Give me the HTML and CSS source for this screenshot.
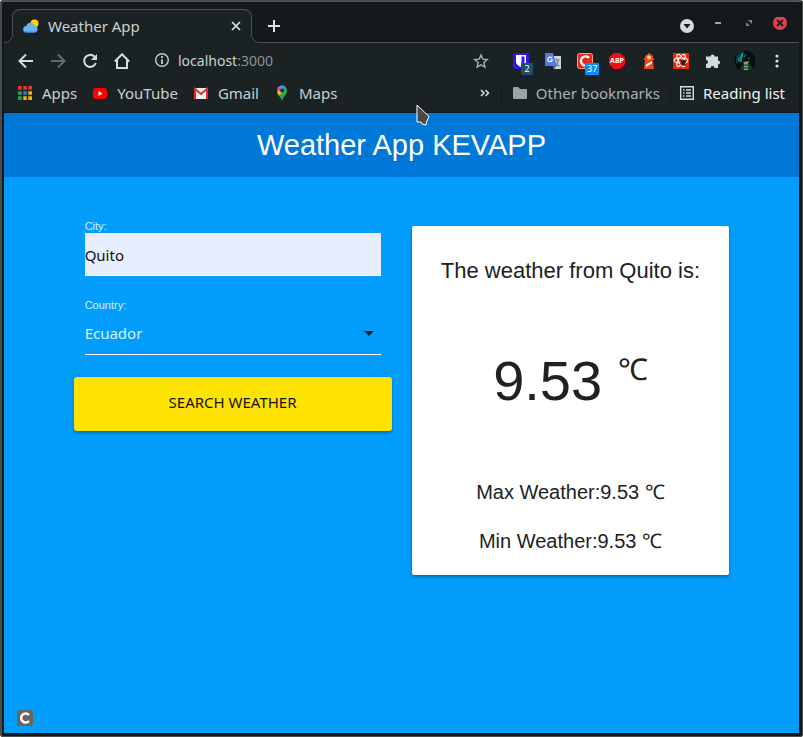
FILE: index.html
```html
<!DOCTYPE html>
<html lang="en">
<head>
<meta charset="utf-8">
<title>Weather App</title>
<link rel="stylesheet" href="styles.css">
</head>
<body>
<div class="window">
  <div class="tabstrip">
    <div class="tab">
      <svg class="foot foot-left" viewBox="0 0 9 9"><path class="foot-fill" d="M8.500 0H9V9H0V8.500A8.500 8.500 0 0 0 8.500 0z"/><path class="foot-line" d="M0 8.500A8 8 0 0 0 8.500 0"/></svg>
      <svg class="icon16" viewBox="0 0 16 16"><circle cx="11.500" cy="5.500" r="4" fill="#ffd400"/><path d="M3.500 14.500a3.200 3.200 0 0 1-.2-6.400A4.300 4.300 0 0 1 11.500 7.500a3.600 3.600 0 0 1 .5 7z" fill="#6bb3f8"/><path d="M1 13q2 2 11 1.300 2-.3 2.500-1.300-3 1-13.500 0z" fill="#4389df"/></svg>
      <span class="tab-title">Weather App</span>
      <button class="plain tab-close" aria-label="Close tab"><svg width="10" height="10" viewBox="0 0 10 10"><path d="M1 1l8 8M9 1L1 9" stroke="#dce5e5" stroke-width="1.700"/></svg></button>
      <svg class="foot foot-right" viewBox="0 0 9 9"><path class="foot-fill" d="M.5 0H0V9H9V8.500A8.500 8.500 0 0 1 .5 0z"/><path class="foot-line" d="M9 8.500A8 8 0 0 1 .5 0"/></svg>
    </div>
    <button class="plain new-tab" aria-label="New tab"><svg width="12" height="12" viewBox="0 0 12 12"><path d="M6 0v12M0 6h12" stroke="#dce5e5" stroke-width="2"/></svg></button>
    <div class="window-buttons">
      <button class="plain" aria-label="Search tabs"><svg class="icon16" viewBox="0 0 16 16"><circle cx="8" cy="9" r="7" fill="#d3dcdb"/><path d="M4.500 7h7L8 11.500z" fill="#141a1b"/></svg></button>
      <button class="plain" aria-label="Minimize"><svg class="icon16" viewBox="0 0 16 16"><path d="M5 6h6" stroke="#9ca3a5" stroke-width="2"/></svg></button>
      <button class="plain" aria-label="Restore"><svg class="icon16" viewBox="0 0 16 16" fill="#7e8688"><path d="M7 3h4v4zM5 5v4h4z"/></svg></button>
      <button class="plain" aria-label="Close"><svg class="icon16" viewBox="0 0 16 16"><circle cx="8" cy="6" r="7" fill="#e0434f"/><path d="M5 3l6 6M11 3L5 9" stroke="#22191b" stroke-width="2"/></svg></button>
    </div>
  </div>

  <div class="toolbar">
    <button class="plain tool" aria-label="Back"><svg class="icon16" viewBox="0 0 16 16"><path d="M15 8H2M8 1.500L1.500 8 8 14.500" fill="none" stroke="#d5dede" stroke-width="2"/></svg></button>
    <button class="plain tool" aria-label="Forward"><svg class="icon16" viewBox="0 0 16 16"><path d="M1 8h13M8 1.500L14.500 8 8 14.500" fill="none" stroke="#626a6b" stroke-width="2"/></svg></button>
    <button class="plain tool" aria-label="Reload"><svg class="icon16" viewBox="0 0 16 16"><path d="M13.800 10A6 6 0 1 1 12.500 3.700" fill="none" stroke="#d5dede" stroke-width="2"/><path d="M15 1v6H9z" fill="#d5dede"/></svg></button>
    <button class="plain tool" aria-label="Home"><svg class="icon16" viewBox="0 0 16 16"><path d="M.8 8.500L8 1.300l7.200 7.200M3 7v8h10V7" fill="none" stroke="#d5dede" stroke-width="2"/></svg></button>
    <div class="address">
      <svg class="icon16" viewBox="0 0 16 16"><circle cx="8" cy="8" r="6.300" fill="none" stroke="#c4cccc" stroke-width="1.400"/><path d="M8 4v2M8 7.200V12" stroke="#c4cccc" stroke-width="1.800"/></svg>
      <span class="url">localhost<span class="port">:3000</span></span>
    </div>
    <button class="plain tool star" aria-label="Bookmark"><svg class="icon16" viewBox="0 0 16 16"><path d="M8 2l1.800 4.200 4.500.4-3.400 3 1 4.500L8 11.800l-3.900 2.300 1-4.500-3.400-3 4.500-.4z" fill="none" stroke="#aab3b2" stroke-width="1.400"/></svg></button>
    <button class="plain tool" aria-label="Bitwarden"><svg class="icon16" viewBox="0 0 16 16"><rect width="16" height="16" rx="2" fill="#2d16e8"/><path d="M3 2h10v6.500c0 3-2.500 4.500-5 5.500-2.500-1-5-2.500-5-5.500z" fill="#fff"/><path d="M8.500 3.500h3v5c0 1.500-1.500 2.500-3 3.300z" fill="#2d16e8"/></svg><span class="badge">2</span></button>
    <button class="plain tool" aria-label="Translate"><svg class="icon16" viewBox="0 0 16 16"><path d="M5 3h11v13H9z" fill="#d0d4d8"/><path d="M8.500 7h6M11.500 5.500V7M9.500 13q3.500-2 4-6M9.500 8.500q1.500 3.500 5 4.500" fill="none" stroke="#607c8c" stroke-width="1.200"/><path d="M0 0h8l3.500 13H0z" fill="#5577e8"/><path d="M7 5.200A2.300 2.300 0 1 0 7.300 7H5.200" fill="none" stroke="#fff" stroke-width="1.200"/><path d="M7.500 13h4L9 16z" fill="#3655c5"/></svg></button>
    <button class="plain tool" aria-label="CORS extension"><svg class="icon16" viewBox="0 0 16 16"><rect x=".5" y=".5" width="15" height="15" rx="2" fill="#e8281e" stroke="#ff9b80"/><path d="M12 5A4.600 4.600 0 1 0 12 11" fill="none" stroke="#fff" stroke-width="2.400"/></svg><span class="badge badge-blue">37</span></button>
    <button class="plain tool" aria-label="Adblock Plus"><span class="abp">ABP</span></button>
    <button class="plain tool" aria-label="Lighthouse"><svg class="icon16" viewBox="0 0 16 16"><path d="M8 0l4 3v2h1v2h-1l1 9H3l1-9H3V5h1V3z" fill="#ef4421"/><circle cx="8" cy="4.500" r="2" fill="#ffdb8a"/><path d="M5 11.500L11 8v2.500l-6 3.500z" fill="#fff3eb"/></svg></button>
    <button class="plain tool" aria-label="React tools"><svg class="icon16" viewBox="0 0 16 16"><path d="M0 0h16v16H0z" fill="#e5280d"/><g fill="none" stroke="#ffe4dc" stroke-width="1.300"><ellipse cx="8" cy="7.500" rx="6.800" ry="2.600"/><ellipse cx="8" cy="7.500" rx="6.800" ry="2.600" transform="rotate(60 8 7.500)"/><ellipse cx="8" cy="7.500" rx="6.800" ry="2.600" transform="rotate(120 8 7.500)"/></g><ellipse cx="10" cy="9.500" rx="2" ry="3" fill="#451512" transform="rotate(40 10 9.500)"/><path d="M7 8l6 4M11 7l1 6M8 12l5-3" stroke="#451512"/></svg></button>
    <button class="plain tool" aria-label="Extensions"><svg class="icon16" viewBox="0 0 16 16"><path d="M1 3.500h4.500a2 2 0 1 1 4 0H13V7.500a2 2 0 1 1 0 4V15H9.500a2 2 0 0 0-4 0H1v-4a2 2 0 0 0 0-4z" fill="#d3dcdb"/></svg></button>
    <button class="plain tool" aria-label="Profile"><svg width="22" height="22" viewBox="0 0 22 22"><circle cx="11" cy="11" r="10.500" fill="#070c0d"/><path d="M2 6q4-5 8-5l-3 9-5 4z" fill="#0a3b3e"/><path d="M4 10l5-7-2 9zM10 7l2-3M14 9l2-1" stroke="#1d9499" fill="#126f73"/><path d="M6 20q1-5 4-6h5q3 1 3 5-6 4-12 1z" fill="#193c1c"/><path d="M9 12l6-1-1 3v6h-4v-6z" fill="#80998b"/><path d="M10 15h4M10 18h4" stroke="#172421"/></svg></button>
    <button class="plain tool" aria-label="Menu"><svg class="icon16" viewBox="0 0 16 16" fill="#d5dede"><circle cx="8" cy="3" r="1.600"/><circle cx="8" cy="8" r="1.600"/><circle cx="8" cy="13" r="1.600"/></svg></button>
  </div>

  <nav class="bookmarks">
    <a href="#" class="mark"><svg class="icon16" viewBox="0 0 16 16"><path d="M1 1h4v4H1zM6 1h4v4H6zM11 1h4v4h-4z" fill="#ed3025"/><path d="M1 6h4v4H1z" fill="#23a45b"/><path d="M6 6h4v4H6z" fill="#2b7de9"/><path d="M11 6h4v4h-4z" fill="#f5b400"/><path d="M1 11h4v4H1z" fill="#23a45b"/><path d="M6 11h4v4H6zM11 11h4v4h-4z" fill="#f5b400"/><path d="M5.500 1v14M10.500 1v14M1 5.500h14M1 10.500h14" stroke="#1b2224" stroke-width="1.500"/></svg>Apps</a>
    <a href="#" class="mark"><svg class="icon16" viewBox="0 0 16 16"><rect x="1" y="3" width="14" height="11" rx="3" fill="#f00"/><path d="M6.500 6v5l4-2.500z" fill="#fff"/></svg>YouTube</a>
    <a href="#" class="mark"><svg class="icon16" viewBox="0 0 16 16"><rect x="1" y="3" width="14" height="11" rx="1" fill="#f1f1f1"/><path d="M2 14V4l6 5 6-5v10" fill="none" stroke="#e02d2a" stroke-width="2"/></svg>Gmail</a>
    <a href="#" class="mark"><svg class="icon16" viewBox="0 0 16 16"><path d="M8 16C7 12 3 10 3 5.500A5 5 0 0 1 13 5.500C13 10 9 12 8 16z" fill="#28a852"/><path d="M3.900 9L11.500 2A5 5 0 0 0 4.200 2.200L3 5q0 2 .9 4z" fill="#4c8df5"/><path d="M4.200 2.200A5 5 0 0 0 3.300 7L7 4z" fill="#ea4335"/><path d="M3.300 7q.5 2 1.700 3.500L9.800 6 6.200 4.800z" fill="#fbbc04"/><circle cx="8" cy="5.500" r="1.900" fill="#182a55"/></svg>Maps</a>
    <div class="marks-end">
      <button class="plain more" aria-label="More bookmarks"><svg width="10" height="8" viewBox="0 0 10 8"><path d="M1 1l3 3-3 3M5.500 1l3 3-3 3" fill="none" stroke="#d5dede" stroke-width="1.500"/></svg></button>
      <a href="#" class="mark other"><svg class="icon16" viewBox="0 0 16 16"><path d="M1 3q0-1 1-1h4l2 2h6q1 0 1 1v8q0 1-1 1H2q-1 0-1-1z" fill="#9ca3a3"/></svg>Other bookmarks</a>
      <a href="#" class="mark reading"><svg class="icon16" viewBox="0 0 16 16"><path d="M1.700 1.700h12.600v12.600H1.700z" fill="none" stroke="#d5dede" stroke-width="1.400"/><path d="M4 5h1.500M4 8h1.500M4 11h1.500M7 5h5M7 8h5M7 11h5" stroke="#d5dede" stroke-width="1.400"/></svg>Reading list</a>
    </div>
  </nav>

  <main class="page">
    <header class="app-header"><h1>Weather App KEVAPP</h1></header>
    <div class="container">
      <form class="search">
        <div class="field">
          <label for="city">City:</label>
          <input id="city" type="text" value="Quito">
        </div>
        <div class="field country">
          <label for="country">Country:</label>
          <div class="select-wrap">
            <select id="country"><option>Ecuador</option></select>
            <svg class="caret" viewBox="0 0 10 5"><path d="M0 0h10L5 5z" fill="#06202f"/></svg>
          </div>
        </div>
        <button type="button" class="submit">SEARCH WEATHER</button>
      </form>
      <section class="result">
        <div class="card">
          <h2>The weather from Quito is:</h2>
          <p class="temperature">9.53 <span class="unit">℃</span></p>
          <p class="range">Max Weather:9.53 ℃</p>
          <p class="range">Min Weather:9.53 ℃</p>
        </div>
      </section>
    </div>
    <svg class="corner" viewBox="0 0 16 16"><rect width="16" height="16" rx="2" fill="#666"/><path d="M12 5A4.500 4.500 0 1 0 12 11" fill="none" stroke="#fffdf0" stroke-width="2.500"/></svg>
  </main>
</div>
<svg class="pointer" viewBox="0 0 14 22"><path d="M1 1v17h4l1 2 4 1 .5-3L13 12.500z" fill="#494949" stroke="#fff" stroke-linejoin="round"/></svg>
</body>
</html>
```
FILE: styles.css
```css
* { box-sizing: border-box; }
html { background: #fff; }
body {
  margin: 0;
  min-height: 100vh;
  display: flex;
  font-family: "Noto Sans", sans-serif;
  font-size: 15px;
  color: #c9d1d0;
}
svg { display: block; flex: none; }
h1, h2, p { margin: 0; font-weight: 400; }
a { color: inherit; text-decoration: none; }

.window {
  flex: 1;
  display: flex;
  flex-direction: column;
  border: 2px solid #101617;
  border-top-color: #555;
  border-left-color: #444a4a;
  outline: 1px solid #4b4f50;
  outline-offset: -1px;
  border-radius: 3px;
  padding: 0 2px 2px;
  background: #12191a;
}
.plain {
  border: 0;
  padding: 0;
  background: none;
  display: flex;
  align-items: center;
  justify-content: center;
}
.icon16 { width: 16px; height: 16px; }

.tabstrip {
  display: flex;
  height: 41px;
  padding-left: 8px;
  background: #141a1b;
  border-bottom: 1px solid #4b5253;
}
.tab {
  position: relative;
  display: flex;
  align-items: center;
  gap: 9px;
  width: 240px;
  margin: 7px 0 -1px;
  padding: 0 10px 2px;
  border: 1px solid #4b5253;
  border-bottom: 0;
  border-radius: 8px 8px 0 0;
  background: #1b2224;
}
.tab-title { flex: 1; }
.tab-close { width: 10px; height: 16px; }
.foot { position: absolute; bottom: 0; width: 9px; height: 9px; }
.foot-left { left: -9px; }
.foot-right { right: -9px; }
.foot-fill { fill: #1b2224; }
.foot-line { fill: none; stroke: #4b5253; }
.new-tab { width: 28px; margin: 7px 0 0 8px; }
.window-buttons {
  display: flex;
  align-items: center;
  gap: 15px;
  margin-left: auto;
  padding: 5px 11px 0 0;
}

.toolbar {
  display: flex;
  align-items: center;
  height: 36px;
  padding: 0 6px;
  background: #1b2224;
}
.tool { position: relative; width: 32px; height: 32px; }
.address {
  flex: 1;
  display: flex;
  align-items: center;
  gap: 8px;
  padding: 0 0 2px 16px;
  font-size: 14px;
}
.port { color: #8b9293; }
.star { margin-right: 8px; }
.badge {
  position: absolute;
  left: 16px;
  top: 18px;
  min-width: 12px;
  padding: 0 2px;
  border-radius: 1px;
  background: #214e6b;
  color: #fff;
  font: 9px/12px "Noto Sans", sans-serif;
}
.badge-blue { background: #0b8cf2; }
.abp {
  width: 16px;
  background: #f40d12;
  color: #fff;
  font: 700 7px/16px "Noto Sans", sans-serif;
  text-align: center;
  clip-path: polygon(30% 0, 70% 0, 100% 30%, 100% 70%, 70% 100%, 30% 100%, 0 70%, 0 30%);
}

.bookmarks {
  display: flex;
  align-items: center;
  gap: 15px;
  height: 34px;
  padding: 0 14px 6px 13px;
  background: #1b2224;
  border-bottom: 1px solid #10191d;
}
.mark { display: flex; align-items: center; gap: 9px; white-space: nowrap; }
.marks-end { display: flex; align-items: center; margin-left: auto; }
.more { margin-right: 11px; }
.other {
  padding: 0 10px;
  border-left: 1px solid #141a1b;
  border-right: 1px solid #141a1b;
  color: #a9b2b1;
}
.other, .reading { gap: 8px; }
.reading { padding-left: 8px; color: #f1f4f4; }

.page {
  flex: 1;
  display: flex;
  flex-direction: column;
  background: #039dfc;
  font-family: "Liberation Sans", sans-serif;
}
.app-header {
  background: #0078d7;
  color: #fff;
  text-align: center;
}
.app-header h1 { font-size: 29px; line-height: 64px; }
.container {
  display: flex;
  width: 85%;
  margin: 0 auto;
  padding-top: 42px;
}
.search, .result { flex: 1; padding: 0 10px; }
.search { color: #fff; }
.field { display: flex; flex-direction: column; margin: 0 11px; }
.field label { font-size: 11px; line-height: 14px; color: #d8f0ff; }
.field input, .field select {
  width: 100%;
  height: 43px;
  margin: 0;
  padding: 0;
  border: 0;
  border-bottom: 1px solid #fff;
  border-radius: 0;
  outline: 0;
  font: 15px "Noto Sans", sans-serif;
}
.field input { padding-top: 2px; background: #e8eefe; color: #111; }
.country { margin-top: 22px; }
.select-wrap { position: relative; }
.field select { appearance: none; background: transparent; color: #d8f0ff; }
.caret { position: absolute; right: 7px; top: 19px; width: 10px; height: 5px; }
.submit {
  display: block;
  width: 100%;
  height: 54px;
  margin-top: 22px;
  padding: 0 0 4px;
  border: 0;
  border-radius: 3px;
  background: #ffe300;
  color: #111;
  font: 15px "Noto Sans", sans-serif;
  box-shadow: 0 2px 3px rgba(0, 0, 0, .3);
}
.card {
  margin-top: 7px;
  padding: 20px 16px 9px;
  border-radius: 2px;
  background: #fff;
  color: #212121;
  text-align: center;
  box-shadow: 0 2px 3px rgba(0, 0, 0, .3);
}
.card h2 { font-size: 22px; line-height: 50px; }
.temperature { padding: 53px 0 55px; font-size: 56px; line-height: 64px; }
.unit { font-size: 30px; vertical-align: super; line-height: 1; }
.range { font-size: 20px; line-height: 49px; }
.corner { width: 16px; height: 16px; margin: auto 0 7px 13px; }
.pointer { position: absolute; left: 416px; top: 104px; width: 14px; height: 22px; }
```
